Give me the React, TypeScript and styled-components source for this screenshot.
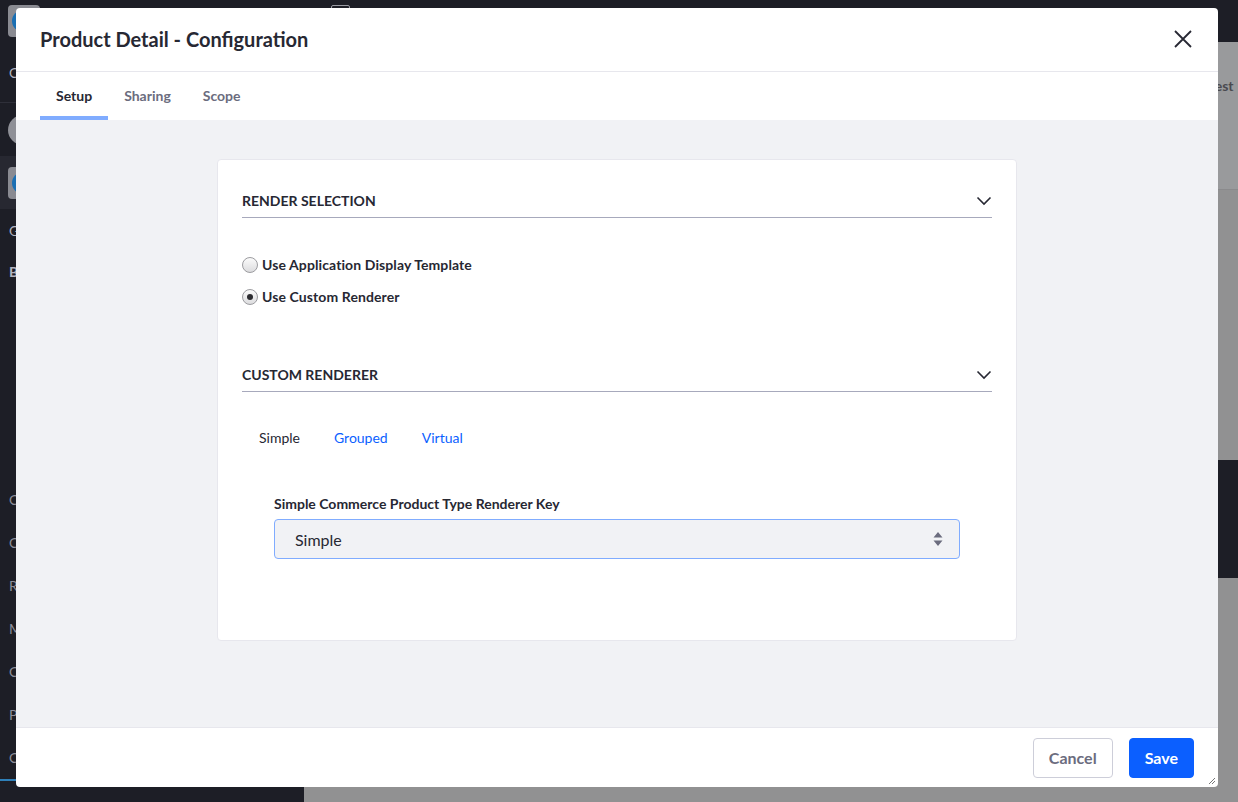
import React from "react";
import styled, { createGlobalStyle } from "styled-components";

const GlobalStyle = createGlobalStyle`
  html, body { margin: 0; padding: 0; }
  body {
    font-family: Lato, "Liberation Sans", sans-serif;
    width: 1238px;
    height: 802px;
    overflow: hidden;
    color: #272833;
  }
  * { box-sizing: border-box; }
`;

const Stage = styled.div`
  position: relative;
  width: 1238px;
  height: 802px;
  overflow: hidden;
`;

/* ---------- dimmed application behind the modal ---------- */
const Backdrop = styled.div`
  display: grid;
  grid-template-columns: 304px 1fr;
  height: 100%;
`;

const Sidebar = styled.aside`
  background: #1d1e26;
  display: flex;
  flex-direction: column;
`;

const SideTop = styled.div`
  height: 42px;
  display: flex;
  align-items: center;
  padding-left: 8px;
`;

const LogoTile = styled.div`
  width: 32px;
  height: 32px;
  border-radius: 4px;
  background: #8a8b92;
  display: flex;
  align-items: center;
  padding-left: 4px;
  &::after {
    content: "";
    width: 22px;
    height: 22px;
    border-radius: 50%;
    background: #1b6fb3;
  }
`;

const SideLetterRow = styled.div<{ $h: number; $bold?: boolean; $light?: boolean }>`
  height: ${(p) => p.$h}px;
  display: flex;
  align-items: center;
  padding-left: 9px;
  font-size: 14px;
  font-weight: ${(p) => (p.$bold ? 700 : 400)};
  color: ${(p) => (p.$light ? "#b3b4c0" : "#8d8e9b")};
`;

const SideDivider = styled.div`
  height: 1px;
  background: #2e2f39;
`;

const AvatarRow = styled.div`
  height: 53px;
  display: flex;
  align-items: center;
  padding-left: 8px;
`;

const Avatar = styled.div`
  width: 30px;
  height: 30px;
  border-radius: 50%;
  background: #8f9097;
`;

const ActiveRow = styled.div`
  height: 53px;
  background: #272831;
  display: flex;
  align-items: center;
  padding-left: 8px;
`;

const SideSpacer = styled.div`
  flex: 1;
`;

const SideBottomBar = styled.div`
  height: 2px;
  width: 20px;
  background: #2e7fb8;
  margin-bottom: 21px;
`;

const Main = styled.div`
  display: flex;
  flex-direction: column;
`;

const TopBar = styled.div`
  height: 42px;
  background: #1d1e26;
  display: flex;
  padding: 5px 0 0 27px;
`;

const TopIcon = styled.div`
  width: 19px;
  height: 14px;
  border: 1px solid #9a9ba3;
  border-radius: 2px;
`;

const PageHeader = styled.div`
  height: 148px;
  background: #999a9c;
  border-bottom: 1px solid #8a8a8c;
  display: flex;
  justify-content: flex-end;
  padding: 35px 0 0;
`;

const PageTitle = styled.div`
  width: 30px;
  font-size: 14px;
  font-weight: 700;
  color: #4a4a50;
`;

const PageBody = styled.div`
  flex: 1;
  background: #919192;
  display: flex;
  flex-direction: column;
  align-items: flex-end;
  padding-top: 270px;
`;

const DarkPanel = styled.div`
  width: 40px;
  height: 118px;
  background: #1d1e26;
`;

/* ---------- modal ---------- */
const Modal = styled.div`
  position: absolute;
  left: 16px;
  top: 8px;
  width: 1202px;
  height: 779px;
  background: #fff;
  border-radius: 4px;
  overflow: hidden;
  display: flex;
  flex-direction: column;
`;

const ModalHeader = styled.header`
  height: 64px;
  flex: none;
  border-bottom: 1px solid #e7e7ed;
  display: flex;
  align-items: center;
  justify-content: space-between;
  padding: 0 26px 1px 24px;
`;

const ModalTitle = styled.h1`
  margin: 0;
  font-size: 20px;
  font-weight: 700;
  color: #272833;
  line-height: 1;
`;

const CloseButton = styled.button`
  border: 0;
  background: none;
  padding: 0;
  width: 18px;
  height: 18px;
  display: flex;
  cursor: pointer;
`;

const TabBar = styled.nav`
  height: 48px;
  flex: none;
  display: flex;
  padding: 0 24px;
  background: #fff;
`;

const Tab = styled.a<{ $active?: boolean }>`
  display: flex;
  align-items: center;
  padding: 2px 16px 0;
  font-size: 14px;
  font-weight: 700;
  color: ${(p) => (p.$active ? "#272833" : "#6b6c7e")};
  border-bottom: 4px solid ${(p) => (p.$active ? "#80acff" : "transparent")};
  text-decoration: none;
`;

const ModalBody = styled.div`
  flex: 1;
  background: #f1f2f5;
  padding: 39px 24px 0;
  display: flex;
  justify-content: center;
  align-items: flex-start;
`;

const Card = styled.div`
  width: 800px;
  height: 482px;
  background: #fff;
  border: 1px solid #e7e7ed;
  border-radius: 4px;
  padding: 24px;
`;

const PanelHeader = styled.div<{ $top: number }>`
  margin-top: ${(p) => p.$top}px;
  display: flex;
  align-items: center;
  justify-content: space-between;
  padding: 7px 0 6px;
  border-bottom: 1px solid #a7a9bc;
`;

const PanelTitle = styled.span`
  font-size: 14px;
  line-height: 20px;
  font-weight: 700;
  color: #272833;
  text-transform: uppercase;
`;

const RadioGroup = styled.div`
  display: flex;
  flex-direction: column;
  gap: 12px;
  margin-top: 37px;
`;

const RadioRow = styled.label`
  display: flex;
  align-items: center;
  gap: 4px;
  font-size: 14px;
  line-height: 20px;
  font-weight: 700;
  color: #272833;
  letter-spacing: 0.1px;
`;

const RadioDot = styled.span<{ $checked?: boolean }>`
  width: 16px;
  height: 16px;
  border-radius: 50%;
  border: 1px solid #9c9ca0;
  background: linear-gradient(#fbfbfb, #dcdcde);
  display: flex;
  align-items: center;
  justify-content: center;
  &::after {
    content: "";
    width: 6px;
    height: 6px;
    border-radius: 50%;
    background: ${(p) => (p.$checked ? "#2b2b30" : "transparent")};
  }
`;

const SubNav = styled.div`
  display: flex;
  margin-top: 26px;
`;

const SubNavLink = styled.a<{ $active?: boolean }>`
  display: block;
  padding: 10px 17px;
  font-size: 14px;
  line-height: 20px;
  color: ${(p) => (p.$active ? "#272833" : "#0b5fff")};
  text-decoration: none;
`;

const Field = styled.div`
  margin: 36px 32px 0;
`;

const FieldLabel = styled.div`
  font-size: 14px;
  line-height: 20px;
  font-weight: 700;
  color: #272833;
  margin-bottom: 5px;
`;

const SelectBox = styled.div`
  height: 40px;
  background: #f1f2f5;
  border: 1px solid #80acff;
  border-radius: 4px;
  display: flex;
  align-items: center;
  justify-content: space-between;
  padding: 0 16px 0 20px;
  font-size: 16px;
  color: #272833;
`;

const ModalFooter = styled.footer`
  height: 60px;
  flex: none;
  border-top: 1px solid #e7e7ed;
  display: flex;
  align-items: center;
  justify-content: flex-end;
  gap: 16px;
  padding: 0 24px 0 0;
`;

const Button = styled.button<{ $primary?: boolean }>`
  height: 40px;
  border-radius: 4px;
  font-family: inherit;
  font-size: 16px;
  font-weight: 700;
  padding: 0 15px;
  border: 1px solid ${(p) => (p.$primary ? "#0b5fff" : "#cdced9")};
  background: ${(p) => (p.$primary ? "#0b5fff" : "#fff")};
  color: ${(p) => (p.$primary ? "#fff" : "#6b6c7e")};
`;

const Grip = styled.svg`
  position: absolute;
  right: 2px;
  bottom: 2px;
`;

const Chevron = () => (
  <svg width="16" height="10" viewBox="0 0 16 10">
    <path d="M1.5 1.5 L8 8 L14.5 1.5" fill="none" stroke="#272833" strokeWidth="1.6" />
  </svg>
);

export default function App() {
  return (
    <Stage>
      <GlobalStyle />
      <Backdrop>
        <Sidebar>
          <SideTop>
            <LogoTile />
          </SideTop>
          <SideLetterRow $h={60} $light>Commerce</SideLetterRow>
          <SideDivider />
          <AvatarRow>
            <Avatar />
          </AvatarRow>
          <ActiveRow>
            <LogoTile />
          </ActiveRow>
          <SideLetterRow $h={42} $light>Guest</SideLetterRow>
          <SideLetterRow $h={40} $bold $light>Build</SideLetterRow>
          <SideSpacer />
          <SideLetterRow $h={43}>Catalogs</SideLetterRow>
          <SideLetterRow $h={43}>Channels</SideLetterRow>
          <SideLetterRow $h={43}>Reports</SideLetterRow>
          <SideLetterRow $h={43}>Models</SideLetterRow>
          <SideLetterRow $h={43}>Content</SideLetterRow>
          <SideLetterRow $h={43}>Pages</SideLetterRow>
          <SideLetterRow $h={43}>Configuration</SideLetterRow>
          <SideBottomBar />
        </Sidebar>
        <Main>
          <TopBar>
            <TopIcon />
          </TopBar>
          <PageHeader>
            <PageTitle>Test</PageTitle>
          </PageHeader>
          <PageBody>
            <DarkPanel />
          </PageBody>
        </Main>
      </Backdrop>

      <Modal>
        <ModalHeader>
          <ModalTitle>Product Detail - Configuration</ModalTitle>
          <CloseButton aria-label="Close">
            <svg width="18" height="18" viewBox="0 0 18 18">
              <path d="M1 1 L17 17 M17 1 L1 17" stroke="#272833" strokeWidth="1.8" fill="none" />
            </svg>
          </CloseButton>
        </ModalHeader>
        <TabBar>
          <Tab $active>Setup</Tab>
          <Tab>Sharing</Tab>
          <Tab>Scope</Tab>
        </TabBar>
        <ModalBody>
          <Card>
            <PanelHeader $top={0}>
              <PanelTitle>Render Selection</PanelTitle>
              <Chevron />
            </PanelHeader>
            <RadioGroup>
              <RadioRow>
                <RadioDot />
                Use Application Display Template
              </RadioRow>
              <RadioRow>
                <RadioDot $checked />
                Use Custom Renderer
              </RadioRow>
            </RadioGroup>
            <PanelHeader $top={51}>
              <PanelTitle>Custom Renderer</PanelTitle>
              <Chevron />
            </PanelHeader>
            <SubNav>
              <SubNavLink $active>Simple</SubNavLink>
              <SubNavLink>Grouped</SubNavLink>
              <SubNavLink>Virtual</SubNavLink>
            </SubNav>
            <Field>
              <FieldLabel>Simple Commerce Product Type Renderer Key</FieldLabel>
              <SelectBox>
                Simple
                <svg width="10" height="16" viewBox="0 0 10 16">
                  <path d="M5 1 L9.5 6.5 L0.5 6.5 Z M5 15 L9.5 9.5 L0.5 9.5 Z" fill="#6b6c7e" />
                </svg>
              </SelectBox>
            </Field>
          </Card>
        </ModalBody>
        <ModalFooter>
          <Button>Cancel</Button>
          <Button $primary>Save</Button>
        </ModalFooter>
        <Grip width="8" height="8" viewBox="0 0 8 8">
          <path d="M7 1 L1 7 M7 4 L4 7" stroke="#777" strokeWidth="1" />
        </Grip>
      </Modal>
    </Stage>
  );
}
